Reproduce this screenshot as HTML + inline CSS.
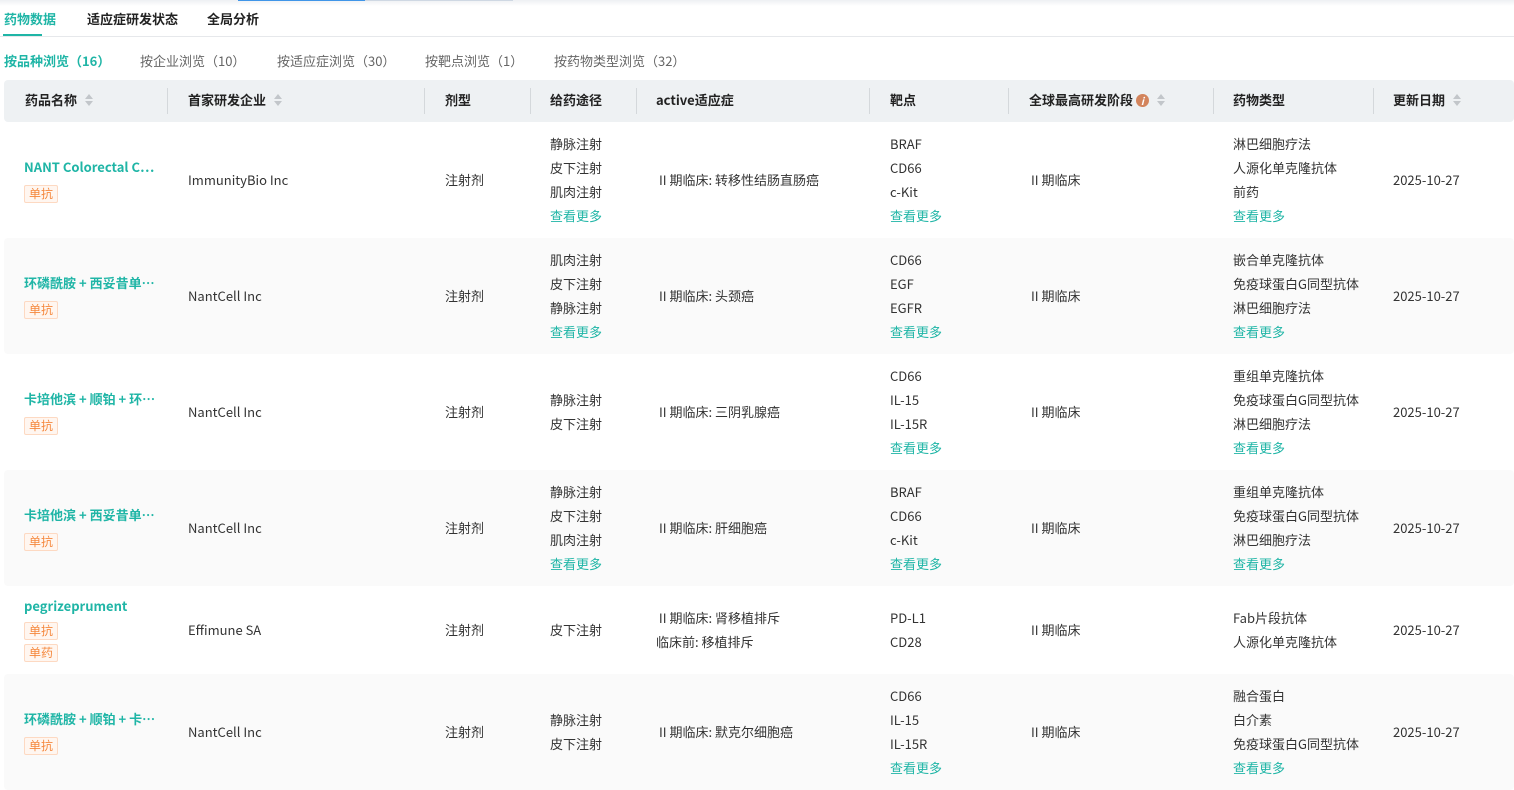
<!DOCTYPE html>
<html><head><meta charset="utf-8"><style>
*{margin:0;padding:0;box-sizing:border-box}
body{width:1514px;height:758px;overflow:hidden;background:#fff;font-family:"Noto Sans CJK SC","Liberation Sans",sans-serif;font-size:13px;color:#333;position:relative}
.abs{position:absolute;white-space:nowrap}
.tab{position:absolute;top:9px;font-size:13px;font-weight:bold;color:#222;line-height:20px}
.sub{position:absolute;top:51px;font-size:13px;color:#666;line-height:20px}
.hdr{position:absolute;left:4px;top:80px;width:1510px;height:42px;background:#eef1f3;border-radius:4px}
.hdr .c{position:absolute;top:10px;font-weight:bold;color:#222;white-space:nowrap;line-height:20px}
.sep{position:absolute;top:8px;width:1px;height:26px;background:#d4d8db}
.sort{display:inline-block;vertical-align:middle;margin-left:8px;width:9px;height:12px;position:relative;top:-1px}
.sort:before,.sort:after{content:"";position:absolute;left:0;border-left:4.5px solid transparent;border-right:4.5px solid transparent}
.sort:before{top:0;border-bottom:5px solid #c2c6ca}
.sort:after{bottom:0;border-top:5px solid #c2c6ca}
.row{position:absolute;left:4px;width:1510px;border-radius:4px}
.g{background:#fafafa}
.cell{position:absolute;line-height:24px;white-space:nowrap;transform:translateY(-50%)}
.name{font-weight:bold;color:#1fb5a6;font-size:13px}
.tag{display:inline-block;border:1px solid #fdd9c2;background:#fff6f0;color:#f5883d;font-size:12px;line-height:16px;padding:0 4px;border-radius:2px}
.more{color:#1fb5a6}
</style></head><body>
<div class="abs" style="left:0;top:0;width:1514px;height:6px;background:linear-gradient(#eef0f3,#fff)"></div>
<div class="abs" style="left:238px;top:0;width:127px;height:1px;background:#3f95e8"></div>
<div class="abs" style="left:365px;top:0;width:148px;height:1px;background:#cfd8e3"></div>

<div class="tab" style="left:4px;color:#1fb5a6">药物数据</div>
<div class="tab" style="left:87px">适应症研发状态</div>
<div class="tab" style="left:207px">全局分析</div>
<div class="abs" style="left:0;top:36px;width:1514px;height:1px;background:#e6e8eb"></div>
<div class="abs" style="left:3px;top:34px;width:39px;height:2px;background:#1fb5a6"></div>

<div class="sub" style="left:4px;color:#1fb5a6;font-weight:bold">按品种浏览（16）</div>
<div class="sub" style="left:140px">按企业浏览（10）</div>
<div class="sub" style="left:277px">按适应症浏览（30）</div>
<div class="sub" style="left:425px">按靶点浏览（1）</div>
<div class="sub" style="left:554px">按药物类型浏览（32）</div>

<div class="hdr">
<div class="c" style="left:21px">药品名称<span class="sort"></span></div>
<div class="sep" style="left:163px"></div>
<div class="c" style="left:184px">首家研发企业<span class="sort"></span></div>
<div class="sep" style="left:420px"></div>
<div class="c" style="left:441px">剂型</div>
<div class="sep" style="left:526px"></div>
<div class="c" style="left:546px">给药途径</div>
<div class="sep" style="left:632px"></div>
<div class="c" style="left:652px">active适应症</div>
<div class="sep" style="left:865px"></div>
<div class="c" style="left:886px">靶点</div>
<div class="sep" style="left:1004px"></div>
<div class="c" style="left:1025px">全球最高研发阶段 <span style="display:inline-block;width:13px;height:13px;border-radius:50%;background:#d3845c;color:#fff;font-size:10px;line-height:13px;text-align:center;font-style:italic;vertical-align:middle;position:relative;top:-1px">i</span><span class="sort"></span></div>
<div class="sep" style="left:1209px"></div>
<div class="c" style="left:1229px">药物类型</div>
<div class="sep" style="left:1369px"></div>
<div class="c" style="left:1389px">更新日期<span class="sort"></span></div>
</div>

<div class="row" style="top:122px;height:116px">
<div class="cell" style="left:20px;top:58px;line-height:26px"><div class="name">NANT Colorectal C…</div><span class="tag">单抗</span></div>
<div class="cell" style="left:184px;top:58px">ImmunityBio Inc</div>
<div class="cell" style="left:441px;top:58px">注射剂</div>
<div class="cell" style="left:546px;top:58px">静脉注射<br>皮下注射<br>肌肉注射<br><span class="more">查看更多</span></div>
<div class="cell" style="left:655px;top:58px">II 期临床: 转移性结肠直肠癌</div>
<div class="cell" style="left:886px;top:58px">BRAF<br>CD66<br>c-Kit<br><span class="more">查看更多</span></div>
<div class="cell" style="left:1027px;top:58px">II 期临床</div>
<div class="cell" style="left:1229px;top:58px">淋巴细胞疗法<br>人源化单克隆抗体<br>前药<br><span class="more">查看更多</span></div>
<div class="cell" style="left:1389px;top:58px">2025-10-27</div>
</div>
<div class="row g" style="top:238px;height:116px">
<div class="cell" style="left:20px;top:58px;line-height:26px"><div class="name">环磷酰胺 + 西妥昔单…</div><span class="tag">单抗</span></div>
<div class="cell" style="left:184px;top:58px">NantCell Inc</div>
<div class="cell" style="left:441px;top:58px">注射剂</div>
<div class="cell" style="left:546px;top:58px">肌肉注射<br>皮下注射<br>静脉注射<br><span class="more">查看更多</span></div>
<div class="cell" style="left:655px;top:58px">II 期临床: 头颈癌</div>
<div class="cell" style="left:886px;top:58px">CD66<br>EGF<br>EGFR<br><span class="more">查看更多</span></div>
<div class="cell" style="left:1027px;top:58px">II 期临床</div>
<div class="cell" style="left:1229px;top:58px">嵌合单克隆抗体<br>免疫球蛋白G同型抗体<br>淋巴细胞疗法<br><span class="more">查看更多</span></div>
<div class="cell" style="left:1389px;top:58px">2025-10-27</div>
</div>
<div class="row" style="top:354px;height:116px">
<div class="cell" style="left:20px;top:58px;line-height:26px"><div class="name">卡培他滨 + 顺铂 + 环…</div><span class="tag">单抗</span></div>
<div class="cell" style="left:184px;top:58px">NantCell Inc</div>
<div class="cell" style="left:441px;top:58px">注射剂</div>
<div class="cell" style="left:546px;top:58px">静脉注射<br>皮下注射</div>
<div class="cell" style="left:655px;top:58px">II 期临床: 三阴乳腺癌</div>
<div class="cell" style="left:886px;top:58px">CD66<br>IL-15<br>IL-15R<br><span class="more">查看更多</span></div>
<div class="cell" style="left:1027px;top:58px">II 期临床</div>
<div class="cell" style="left:1229px;top:58px">重组单克隆抗体<br>免疫球蛋白G同型抗体<br>淋巴细胞疗法<br><span class="more">查看更多</span></div>
<div class="cell" style="left:1389px;top:58px">2025-10-27</div>
</div>
<div class="row g" style="top:470px;height:116px">
<div class="cell" style="left:20px;top:58px;line-height:26px"><div class="name">卡培他滨 + 西妥昔单…</div><span class="tag">单抗</span></div>
<div class="cell" style="left:184px;top:58px">NantCell Inc</div>
<div class="cell" style="left:441px;top:58px">注射剂</div>
<div class="cell" style="left:546px;top:58px">静脉注射<br>皮下注射<br>肌肉注射<br><span class="more">查看更多</span></div>
<div class="cell" style="left:655px;top:58px">II 期临床: 肝细胞癌</div>
<div class="cell" style="left:886px;top:58px">BRAF<br>CD66<br>c-Kit<br><span class="more">查看更多</span></div>
<div class="cell" style="left:1027px;top:58px">II 期临床</div>
<div class="cell" style="left:1229px;top:58px">重组单克隆抗体<br>免疫球蛋白G同型抗体<br>淋巴细胞疗法<br><span class="more">查看更多</span></div>
<div class="cell" style="left:1389px;top:58px">2025-10-27</div>
</div>
<div class="row" style="top:586px;height:88px">
<div class="cell" style="left:20px;top:42px;line-height:22px"><div class="name" style="line-height:26px">pegrizeprument</div><span class="tag">单抗</span><br><span class="tag">单药</span></div>
<div class="cell" style="left:184px;top:44px">Effimune SA</div>
<div class="cell" style="left:441px;top:44px">注射剂</div>
<div class="cell" style="left:546px;top:44px">皮下注射</div>
<div class="cell" style="left:652px;top:44px">&nbsp;II 期临床: 肾移植排斥<br>临床前: 移植排斥</div>
<div class="cell" style="left:886px;top:44px">PD-L1<br>CD28</div>
<div class="cell" style="left:1027px;top:44px">II 期临床</div>
<div class="cell" style="left:1229px;top:44px">Fab片段抗体<br>人源化单克隆抗体</div>
<div class="cell" style="left:1389px;top:44px">2025-10-27</div>
</div>
<div class="row g" style="top:674px;height:116px">
<div class="cell" style="left:20px;top:58px;line-height:26px"><div class="name">环磷酰胺 + 顺铂 + 卡…</div><span class="tag">单抗</span></div>
<div class="cell" style="left:184px;top:58px">NantCell Inc</div>
<div class="cell" style="left:441px;top:58px">注射剂</div>
<div class="cell" style="left:546px;top:58px">静脉注射<br>皮下注射</div>
<div class="cell" style="left:655px;top:58px">II 期临床: 默克尔细胞癌</div>
<div class="cell" style="left:886px;top:58px">CD66<br>IL-15<br>IL-15R<br><span class="more">查看更多</span></div>
<div class="cell" style="left:1027px;top:58px">II 期临床</div>
<div class="cell" style="left:1229px;top:58px">融合蛋白<br>白介素<br>免疫球蛋白G同型抗体<br><span class="more">查看更多</span></div>
<div class="cell" style="left:1389px;top:58px">2025-10-27</div>
</div>
</body></html>
